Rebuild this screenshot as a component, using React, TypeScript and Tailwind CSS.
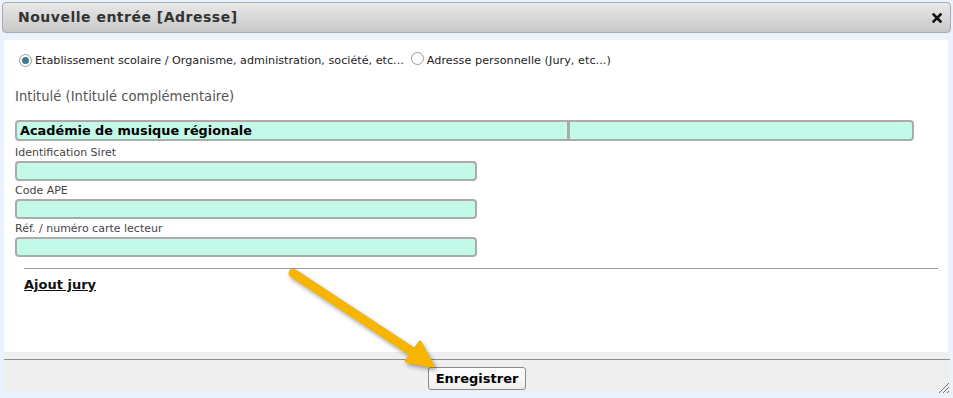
const font = "font-['DejaVu_Sans','Verdana',sans-serif]";

function Radio({ checked }: { checked?: boolean }) {
  return (
    <span className="inline-flex h-[13px] w-[13px] shrink-0 items-center justify-center rounded-full border-[1.5px] border-[#9a9a9a] bg-white">
      {checked && <span className="h-[7px] w-[7px] rounded-full bg-[#3f7b93]" />}
    </span>
  );
}

function Field({ label, first }: { label: string; first?: boolean }) {
  return (
    <div className={first ? "mt-[2px]" : ""}>
      <div className="h-[18px] pt-[3px] text-[11px] leading-[13px] text-[#444]">{label}</div>
      <div className="h-[20px] w-[462px] rounded-[4px] border-2 border-[#ababab] bg-[#c3f9e8]" />
    </div>
  );
}

export default function App() {
  return (
    <div className={`relative h-[398px] w-[953px] overflow-hidden bg-[#eaf3fd] pt-[2px] ${font}`}>
      {/* title bar */}
      <div className="mx-[2px] flex h-[31px] items-center justify-between rounded-[4px] border border-[#aaaaaa] bg-gradient-to-b from-[#e9e9e9] to-[#c8c8c8] pl-[15px] pr-[8px]">
        <span className="text-[14px] font-bold tracking-[0.5px] text-[#333]">Nouvelle entrée [Adresse]</span>
        <svg width="10" height="10" viewBox="0 0 10 10" className="mt-[1px]">
          <path d="M1.5 1.5 L8.5 8.5 M8.5 1.5 L1.5 8.5" stroke="#111" strokeWidth="2.6" strokeLinecap="square" />
        </svg>
      </div>

      {/* body */}
      <div className="ml-[4px] mr-[5px] mt-[7px] h-[312px] bg-white pl-[11px] pt-[14px]">
        <div className="flex h-[15px] items-center text-[11.2px] text-[#222]">
          <span className="ml-[4px] mr-[3px]"><Radio checked /></span>
          <span>Etablissement scolaire / Organisme, administration, société, etc...</span>
          <span className="ml-[7px] mr-[3px]"><Radio /></span>
          <span className="tracking-[0.05px]">Adresse personnelle (Jury, etc...)</span>
        </div>

        <div className="mt-[20px] text-[13.2px] leading-[16px] text-[#555]">Intitulé (Intitulé complémentaire)</div>

        <div className="mt-[15px] flex h-[21px] w-[899px] overflow-hidden rounded-[4px] border-2 border-[#ababab] bg-[#c3f9e8]">
          <div className="flex w-[553px] items-center border-r-[3px] border-[#ababab] pl-[3px] text-[12.85px] font-bold text-black">
            Académie de musique régionale
          </div>
          <div className="flex-1" />
        </div>

        <Field label="Identification Siret" first />
        <Field label="Code APE" />
        <Field label="Réf. / numéro carte lecteur" />

        <div className="ml-[9px] mr-[10px] mt-[11px] border-t border-[#9b9b9b]" />
        <a className="ml-[9px] mt-[6px] inline-block text-[13px] font-bold text-[#111] underline">Ajout jury</a>
      </div>

      {/* button pane */}
      <div className="ml-[4px] mr-[3px] h-[40px] bg-[#efefef] pt-[7px]">
        <div className="flex justify-center border-t border-[#8f8f8f] pt-[7px]">
          <button className="h-[23px] rounded-[3px] border border-[#8a8a8a] bg-gradient-to-b from-white to-[#eeeeee] px-[7px] text-[13px] font-bold text-black">
            Enregistrer
          </button>
        </div>
      </div>

      {/* resize grip */}
      <svg width="12" height="12" viewBox="0 0 12 12" className="absolute bottom-[4px] right-[3px]">
        <path d="M11 1 L1 11 M11 5 L5 11 M11 9 L9 11" stroke="#777" strokeWidth="1" />
      </svg>

      {/* annotation arrow */}
      <svg width="953" height="398" className="pointer-events-none absolute left-0 top-0 drop-shadow-[2px_3px_2px_rgba(0,0,0,0.35)]">
        <line x1="293" y1="273" x2="416" y2="354" stroke="#f7b400" strokeWidth="9" strokeLinecap="round" />
        <polygon points="433,366 406,361 420,342" fill="#f7b400" stroke="#f7b400" strokeWidth="3" strokeLinejoin="round" />
      </svg>
    </div>
  );
}
